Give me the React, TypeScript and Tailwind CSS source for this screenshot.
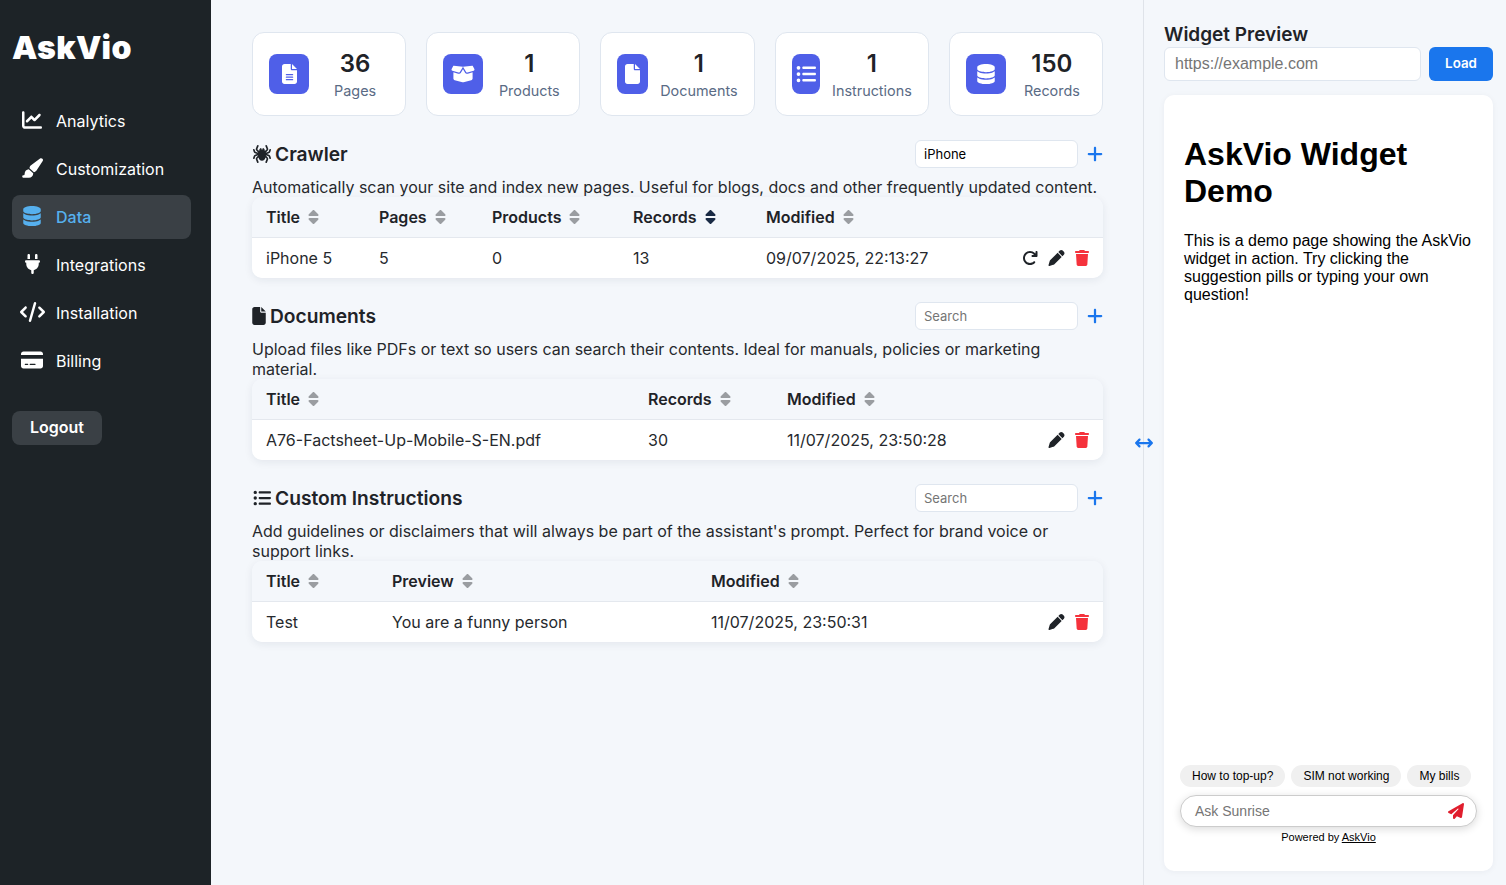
import type { ReactNode } from 'react'
import {
  FaArrowRotateRight,
  FaArrowsLeftRight,
  FaBoxOpen,
  FaChartLine,
  FaCode,
  FaCreditCard,
  FaDatabase,
  FaFile,
  FaFileLines,
  FaListUl,
  FaPaintbrush,
  FaPaperPlane,
  FaPen,
  FaPlug,
  FaPlus,
  FaSort,
  FaSpider,
  FaTrash,
} from 'react-icons/fa6'

const navItems = [
  { label: 'Analytics', icon: <FaChartLine className="h-[20px] w-[20px]" /> },
  { label: 'Customization', icon: <FaPaintbrush className="h-[20px] w-[22px]" /> },
  { label: 'Data', icon: <FaDatabase className="h-[20px] w-[18px]" />, active: true },
  { label: 'Integrations', icon: <FaPlug className="h-[20px] w-[15px]" /> },
  { label: 'Installation', icon: <FaCode className="h-[20px] w-[25px]" /> },
  { label: 'Billing', icon: <FaCreditCard className="h-[20px] w-[22px]" /> },
]

const stats = [
  { value: '36', label: 'Pages', icon: <FaFileLines className="h-5 w-[15px]" /> },
  { value: '1', label: 'Products', icon: <FaBoxOpen className="h-5 w-6" /> },
  { value: '1', label: 'Documents', icon: <FaFile className="h-5 w-[15px]" /> },
  { value: '1', label: 'Instructions', icon: <FaListUl className="h-5 w-5" /> },
  { value: '150', label: 'Records', icon: <FaDatabase className="h-5 w-[18px]" /> },
]

function Sidebar() {
  return (
    <aside className="w-[211px] shrink-0 bg-[#1d2327] pr-5 pl-3 text-white">
      <h1 className="mt-[27px] mb-[30px] text-[32px] leading-[42px] font-black tracking-[0.3px]">AskVio</h1>
      <nav className="flex flex-col gap-1">
        {navItems.map((item) => (
          <a
            key={item.label}
            className={`flex h-11 items-center rounded-lg text-base ${
              item.active ? 'bg-[#3a4045] font-medium text-[#56b0ee]' : 'text-white'
            }`}
          >
            <span className="mr-1 flex w-10 shrink-0 items-center justify-center pb-0.5">{item.icon}</span>
            {item.label}
          </a>
        ))}
      </nav>
      <button className="mt-[28px] h-[34px] w-[90px] rounded-lg bg-[#3a4045] pb-0.5 text-base font-semibold text-white">
        Logout
      </button>
    </aside>
  )
}

function StatCard({ value, label, icon }: { value: string; label: string; icon: ReactNode }) {
  return (
    <div className="flex h-[84px] min-w-0 items-center gap-3 rounded-xl border border-[#dfe6ef] bg-white px-4">
      <div className="flex h-10 w-10 items-center justify-center rounded-lg bg-[#4f5fe8] text-white">{icon}</div>
      <div className="flex-1 text-center">
        <div className="text-2xl leading-[30px] font-semibold text-[#1f2328]">{value}</div>
        <div className="mt-[3px] text-[14.4px] leading-[18px] text-[#5a6b85]">{label}</div>
      </div>
    </div>
  )
}

function SortIcon({ active }: { active?: boolean }) {
  return <FaSort className={`h-4 w-[11px] shrink-0 ${active ? 'text-[#1a2b45]' : 'text-[#9a9da1]'}`} />
}

function RowActions({ refresh }: { refresh?: boolean }) {
  return (
    <div className="flex items-center justify-end gap-[10px] pr-[14px] text-[#1f2328]">
      {refresh && <FaArrowRotateRight className="h-4 w-4" />}
      <FaPen className="h-4 w-[17px]" />
      <FaTrash className="h-4 w-[14px] text-[#f5323c]" />
    </div>
  )
}

type Column = { title: string; width: string; sorted?: boolean }

function DataTable({ columns, cells, refresh }: { columns: Column[]; cells: string[]; refresh?: boolean }) {
  return (
    <div className="overflow-hidden rounded-[10px] shadow-[0_2px_8px_rgba(30,40,60,0.08)]">
      <table className="w-full table-fixed border-collapse">
        <colgroup>
          {columns.map((c) => (
            <col key={c.title} className={c.width} />
          ))}
          <col />
        </colgroup>
        <thead>
          <tr className="h-10 border-b border-[#e4e8ee] bg-[#f4f7fb]">
            {columns.map((c) => (
              <th key={c.title} className="px-[14px] text-left text-base font-semibold text-[#1f2328]">
                <span className="flex items-center gap-2">
                  {c.title}
                  <SortIcon active={c.sorted} />
                </span>
              </th>
            ))}
            <th />
          </tr>
        </thead>
        <tbody>
          <tr className="h-[41px] bg-white text-base text-[#26292d]">
            {cells.map((c) => (
              <td key={c} className="px-[14px]">
                {c}
              </td>
            ))}
            <td>
              <RowActions refresh={refresh} />
            </td>
          </tr>
        </tbody>
      </table>
    </div>
  )
}

function Section(props: {
  icon: ReactNode
  title: string
  search?: string
  desc: string
  children: ReactNode
}) {
  return (
    <section className="mt-6">
      <div className="flex h-7 items-center">
        <h2 className="flex flex-1 items-center gap-[3px] text-[19.2px] font-semibold text-[#1f2328]">
          {props.icon}
          {props.title}
        </h2>
        <input
          defaultValue={props.search}
          placeholder="Search"
          className="h-7 w-[163px] rounded-md border border-[#dfe6ef] bg-white px-2 text-[13px] text-black outline-none placeholder:text-[#757575]"
        />
        <FaPlus className="ml-[9px] h-[18px] w-4 text-[#1a76ed]" />
      </div>
      <p className="mt-[9px] text-base leading-5 text-[#26292d]">{props.desc}</p>
      {props.children}
    </section>
  )
}

function WidgetPreview() {
  return (
    <aside className="relative flex w-[363px] shrink-0 flex-col border-l border-[#dfe3e9] pt-[23px] pr-[13px] pl-5">
      <FaArrowsLeftRight className="absolute top-[434px] -left-[10px] h-[18px] w-5 text-[#1a76ed]" />
      <h2 className="text-[19px] leading-6 font-semibold text-[#1f2328]">Widget Preview</h2>
      <div className="flex gap-2">
        <input
          placeholder="https://example.com"
          className="h-[34px] min-w-0 flex-1 rounded-md border border-[#dfe6ef] bg-white px-[10px] font-['Liberation_Sans',sans-serif] text-base outline-none placeholder:text-[#757575]"
        />
        <button className="h-[34px] w-16 rounded-md bg-[#1a76ed] text-[13.33px] font-semibold text-white">Load</button>
      </div>
      <div className="mt-[14px] flex h-[776px] flex-col rounded-[10px] bg-white px-4 font-['Liberation_Sans',sans-serif] text-black shadow-[0_1px_6px_rgba(30,40,60,0.05)]">
        <div className="flex-1 px-1">
          <h1 className="mt-[41px] text-[32px] leading-[37px] font-bold">AskVio Widget Demo</h1>
          <p className="mt-[22px] text-base leading-[18px]">
            This is a demo page showing the AskVio widget in action. Try clicking the suggestion pills or typing your
            own question!
          </p>
        </div>
        <div className="flex gap-[6px]">
          <span className="rounded-full bg-[#f0f0f0] px-3 py-1 text-xs leading-[14px]">How to top-up?</span>
          <span className="rounded-full bg-[#f0f0f0] px-3 py-1 text-xs leading-[14px]">SIM not working</span>
          <span className="rounded-full bg-[#f0f0f0] px-3 py-1 text-xs leading-[14px]">My bills</span>
        </div>
        <div className="mt-2 flex h-8 items-center justify-between rounded-full border border-[#ccc] bg-white pr-3 pl-[14px] shadow-[0_2px_8px_rgba(0,0,0,0.15)]">
          <span className="text-sm text-[#757575]">Ask Sunrise</span>
          <FaPaperPlane className="h-4 w-4 text-[#e01e2d]" />
        </div>
        <div className="mt-[3px] mb-[27px] text-center text-[11px] leading-[14px]">
          Powered by <span className="underline">AskVio</span>
        </div>
      </div>
    </aside>
  )
}

export default function App() {
  return (
    <div className="flex h-screen w-full overflow-hidden bg-[#f4f7fb] font-['Inter',sans-serif]">
      <Sidebar />
      <main className="min-w-0 flex-1 pt-8 pr-10 pl-[41px]">
        <div className="grid grid-cols-5 gap-5">
          {stats.map((s) => (
            <StatCard key={s.label} {...s} />
          ))}
        </div>
        <Section
          icon={<FaSpider className="h-[18px] w-5" />}
          title="Crawler"
          search="iPhone"
          desc="Automatically scan your site and index new pages. Useful for blogs, docs and other frequently updated content."
        >
          <DataTable
            refresh
            columns={[
              { title: 'Title', width: 'w-[113px]' },
              { title: 'Pages', width: 'w-[113px]' },
              { title: 'Products', width: 'w-[141px]' },
              { title: 'Records', width: 'w-[133px]', sorted: true },
              { title: 'Modified', width: 'w-[220px]' },
            ]}
            cells={['iPhone 5', '5', '0', '13', '09/07/2025, 22:13:27']}
          />
        </Section>
        <Section
          icon={<FaFile className="mr-px h-[18px] w-[14px]" />}
          title="Documents"
          desc="Upload files like PDFs or text so users can search their contents. Ideal for manuals, policies or marketing material."
        >
          <DataTable
            columns={[
              { title: 'Title', width: 'w-[382px]' },
              { title: 'Records', width: 'w-[139px]' },
              { title: 'Modified', width: 'w-[220px]' },
            ]}
            cells={['A76-Factsheet-Up-Mobile-S-EN.pdf', '30', '11/07/2025, 23:50:28']}
          />
        </Section>
        <Section
          icon={<FaListUl className="h-[18px] w-5" />}
          title="Custom Instructions"
          desc="Add guidelines or disclaimers that will always be part of the assistant's prompt. Perfect for brand voice or support links."
        >
          <DataTable
            columns={[
              { title: 'Title', width: 'w-[126px]' },
              { title: 'Preview', width: 'w-[319px]' },
              { title: 'Modified', width: 'w-[220px]' },
            ]}
            cells={['Test', 'You are a funny person', '11/07/2025, 23:50:31']}
          />
        </Section>
      </main>
      <WidgetPreview />
    </div>
  )
}
